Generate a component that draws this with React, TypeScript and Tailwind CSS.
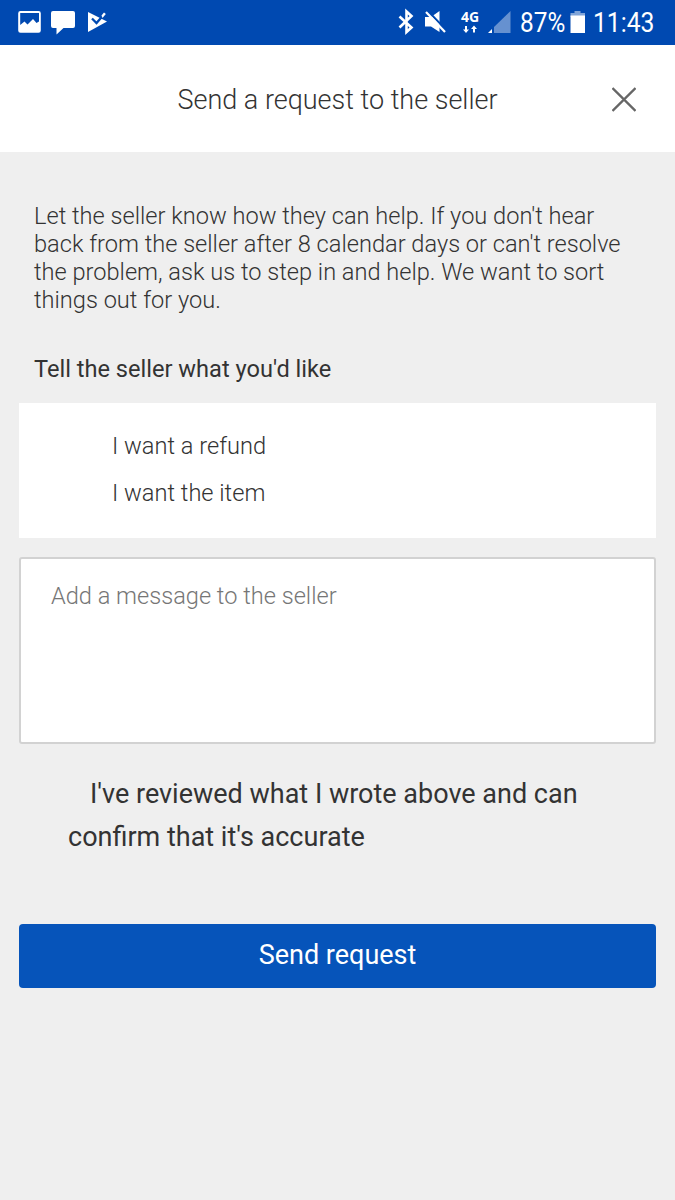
import React from "react";

function StatusBar() {
  return (
    <header className="relative flex h-[45px] items-center bg-[#0049b1] text-white">
      <svg className="block h-[45px] w-[675px]" viewBox="0 0 675 45" fill="currentColor">
        <path fillRule="evenodd" d="M20.500 11h18q2.300 0 2.300 2.300v17.200q0 2.300-2.300 2.300h-18q-2.300 0-2.300-2.300V13.300q0-2.300 2.300-2.300Zm-.3 2v12l4.300-3.500 3 3 5.500-5.500 3.500 4 2.500-1.500V13Z" />
        <path d="M53 11h20q2 0 2 2v13q0 2-2 2h-9.500l-7 6.500v-6.500H53q-2 0-2-2V13q0-2 2-2Z" />
        <path d="M88 12l19 9.500L88 32Z" />
        <path d="M92 18.500l4.500 4.500 7-8" fill="none" stroke="#0049b1" strokeWidth="2.300" />
        <path d="M101.500 15.500l2.500-3 1.800 1.500-3.300 4Z" />
        <path d="M399.500 16.500l12 11-5 4.500V11.500l5 4.500-12 11.500" fill="none" stroke="currentColor" strokeWidth="2.600" />
        <path d="M425 17h6l8.500-6v21l-8.500-5.500h-6Z" />
        <path d="M427.500 10.500l20 21" stroke="#0049b1" strokeWidth="2" />
        <path d="M426 12l19 20" stroke="currentColor" strokeWidth="2.200" />
        <path d="M465 26h2v3.500h2l-3 3.500-3-3.500h2ZM474 25.500l3 3.500h-2v3.500h-2V29h-2Z" />
        <path d="M510.500 11v22H494V27Z" opacity=".4" />
        <path d="M492 29v4h-4Z" />
        <path d="M570.500 13h4v-2h6v2h4.500v4h-14.500Z" opacity=".5" />
        <path d="M570.500 15.500H585V33h-14.500Z" />
      </svg>
      <span className="absolute left-[461px] top-[8px] font-['Open_Sans'] text-[14px] font-bold leading-[18px]">4G</span>
      <span className="absolute left-[520px] top-[7px] origin-left scale-x-[0.87] font-[Roboto] text-[28px] leading-[32px]">87%</span>
      <span className="absolute left-[593px] top-[7px] origin-left scale-x-[0.88] font-[Roboto] text-[28px] leading-[32px]">11:43</span>
    </header>
  );
}

export default function App() {
  return (
    <div className="min-h-[1200px] w-[675px] bg-[#efefef] font-[Roboto,sans-serif] text-[#333]">
      <StatusBar />
      <div className="relative flex h-[107px] items-center justify-center bg-white pt-[4px]">
        <h1 className="text-[27px] font-light">Send a request to the seller</h1>
        <button aria-label="Close" className="absolute right-[39px] top-[42px]">
          <svg width="24" height="25" viewBox="0 0 24 25" fill="none" stroke="#666" strokeWidth="2.3"><path d="M.5 1l23 23M23.500 1L.5 24" /></svg>
        </button>
      </div>
      <main className="px-[19px] pt-[50px]">
        <p className="px-[15px] text-[23.6px] font-light leading-[28px]">
          Let the seller know how they can help. If you don't hear<br />back from the seller after 8 calendar days or can't resolve<br />the problem, ask us to step in and help. We want to sort<br />things out for you.
        </p>
        <h2 className="mt-[41px] px-[15px] text-[23.6px] leading-[28px]">Tell the seller what you'd like</h2>
        <div className="mt-5 h-[135px] bg-white pl-[93px] pt-[20px] text-[23.6px] font-light leading-[47px]">
          <div>I want a refund</div><div>I want the item</div>
        </div>
        <textarea placeholder="Add a message to the seller" className="mt-[19px] block h-[187px] w-full resize-none rounded-[3px] border-2 border-[#d2d2d2] bg-white px-[30px] py-[22px] text-[23.6px] font-light leading-[30px] placeholder:text-[#767676]" />
        <p className="mt-[29px] pl-[49px] indent-[22px] text-[27px] leading-[43px]">I've reviewed what I wrote above and can<br />confirm that it's accurate</p>
        <button className="mt-[65px] block h-[64px] w-full rounded-[4px] bg-[#0654ba] pb-[2px] text-[27px] text-white">Send request</button>
      </main>
    </div>
  );
}
